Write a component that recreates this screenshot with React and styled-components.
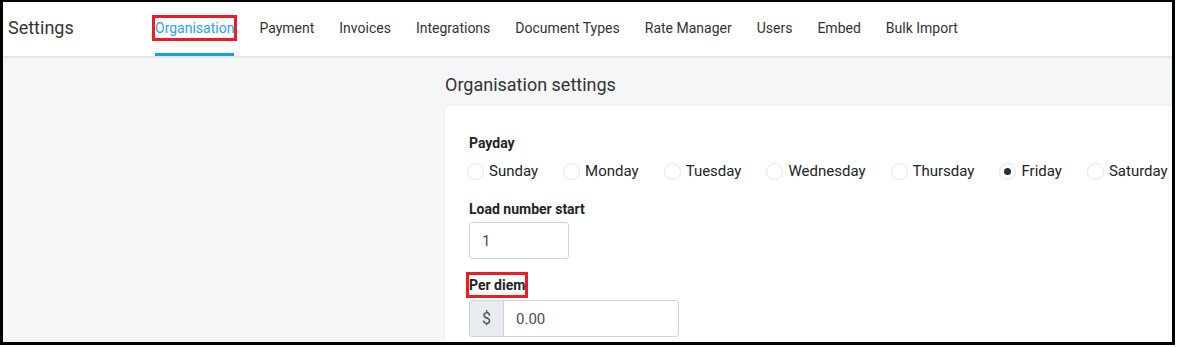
import React from "react"
import styled, { createGlobalStyle } from "styled-components"

const GlobalStyle = createGlobalStyle`
  html, body {
    margin: 0;
    padding: 0;
    background: #fff;
  }
  body {
    font-family: Roboto, "Liberation Sans", Arial, sans-serif;
    color: #212529;
  }
`

const Frame = styled.div`
  width: 1175px;
  height: 345px;
  box-sizing: border-box;
  border: 3px solid #000;
  border-top-width: 2px;
  display: flex;
  flex-direction: column;
  overflow: hidden;
  background: #f5f6f8;
`

const Header = styled.header`
  height: 54px;
  flex-shrink: 0;
  display: flex;
  align-items: stretch;
  background: #fff;
  box-shadow: 0 1px 3px rgba(0, 0, 0, 0.12);
  position: relative;
  z-index: 1;
`

const Title = styled.div`
  width: 147px;
  padding-left: 5px;
  padding-bottom: 3px;
  display: flex;
  align-items: center;
  font-size: 18px;
  color: #333;
`

const Tabs = styled.nav`
  display: flex;
  gap: 25px;
`

const Tab = styled.a`
  display: flex;
  align-items: center;
  box-sizing: border-box;
  border-bottom: 3px solid ${(p) => (p.$active ? "#12a0e2" : "transparent")};
  font-size: 14px;
  line-height: 16px;
  color: ${(p) => (p.$active ? "#2d9fe6" : "#333")};
  text-decoration: none;
  white-space: nowrap;
`

// red annotation box, kept out of the layout by negative margins
const Highlight = styled.span`
  display: inline-block;
  border: 3px solid #ec1c24;
  padding: 2px 0;
  margin: -5px -3px;
  line-height: 16px;
`

const Main = styled.main`
  flex: 1;
  padding-left: 442px;
  padding-top: 17px;
`

const PageTitle = styled.h2`
  margin: 0 0 9px;
  font-size: 18px;
  line-height: 24px;
  font-weight: 400;
  color: #333;
`

const Card = styled.section`
  background: #fff;
  border-radius: 3px 0 0 0;
  box-shadow: 0 0 2px rgba(0, 0, 0, 0.08);
  padding: 27px 0 0 24px;
  height: 260px;
`

const Label = styled.div`
  font-size: 14px;
  line-height: 20px;
  font-weight: 700;
  color: #212529;
  margin-top: ${(p) => p.$top || 0}px;
`

const RadioRow = styled.div`
  display: flex;
  gap: 25px;
  margin: 8px 0 0 -2px;
  white-space: nowrap;
`

const RadioItem = styled.label`
  display: flex;
  align-items: center;
  gap: 5px;
  font-size: 15px;
  line-height: 20px;
  color: #212529;
`

const Circle = styled.span`
  width: 15px;
  height: 15px;
  border: 1px solid #e2e4e7;
  border-radius: 50%;
  display: flex;
  align-items: center;
  justify-content: center;

  &::after {
    content: "";
    display: ${(p) => (p.$checked ? "block" : "none")};
    width: 7px;
    height: 7px;
    border-radius: 50%;
    background: #2b2f33;
  }
`

const TextInput = styled.div`
  margin-top: 3px;
  width: 100px;
  height: 37px;
  box-sizing: border-box;
  border: 1px solid #ced4da;
  border-radius: 3px;
  padding-left: 12px;
  display: flex;
  align-items: center;
  font-size: 15px;
  color: #5a4a48;
`

const InputGroup = styled.div`
  margin-top: 5px;
  display: flex;
  width: 210px;
  height: 37px;
  box-sizing: border-box;
  border: 1px solid #ced4da;
  border-radius: 3px;
  overflow: hidden;
`

const Addon = styled.span`
  width: 33px;
  background: #e9ecef;
  border-right: 1px solid #ced4da;
  display: flex;
  align-items: center;
  justify-content: center;
  font-size: 16px;
  color: #495057;
`

const GroupValue = styled.span`
  flex: 1;
  padding-left: 12px;
  display: flex;
  align-items: center;
  font-size: 15px;
  color: #495057;
`

const tabs = [
  "Organisation",
  "Payment",
  "Invoices",
  "Integrations",
  "Document Types",
  "Rate Manager",
  "Users",
  "Embed",
  "Bulk Import",
]

const days = ["Sunday", "Monday", "Tuesday", "Wednesday", "Thursday", "Friday", "Saturday"]

export default function App() {
  return (
    <>
      <GlobalStyle />
      <Frame>
        <Header>
          <Title>Settings</Title>
          <Tabs>
            {tabs.map((t, i) => (
              <Tab key={t} $active={i === 0}>
                {i === 0 ? <Highlight>{t}</Highlight> : t}
              </Tab>
            ))}
          </Tabs>
        </Header>
        <Main>
          <PageTitle>Organisation settings</PageTitle>
          <Card>
            <Label>Payday</Label>
            <RadioRow>
              {days.map((d) => (
                <RadioItem key={d}>
                  <Circle $checked={d === "Friday"} />
                  {d}
                </RadioItem>
              ))}
            </RadioRow>
            <Label $top={18}>Load number start</Label>
            <TextInput>1</TextInput>
            <Label $top={16}>
              <Highlight>Per diem</Highlight>
            </Label>
            <InputGroup>
              <Addon>$</Addon>
              <GroupValue>0.00</GroupValue>
            </InputGroup>
          </Card>
        </Main>
      </Frame>
    </>
  )
}
